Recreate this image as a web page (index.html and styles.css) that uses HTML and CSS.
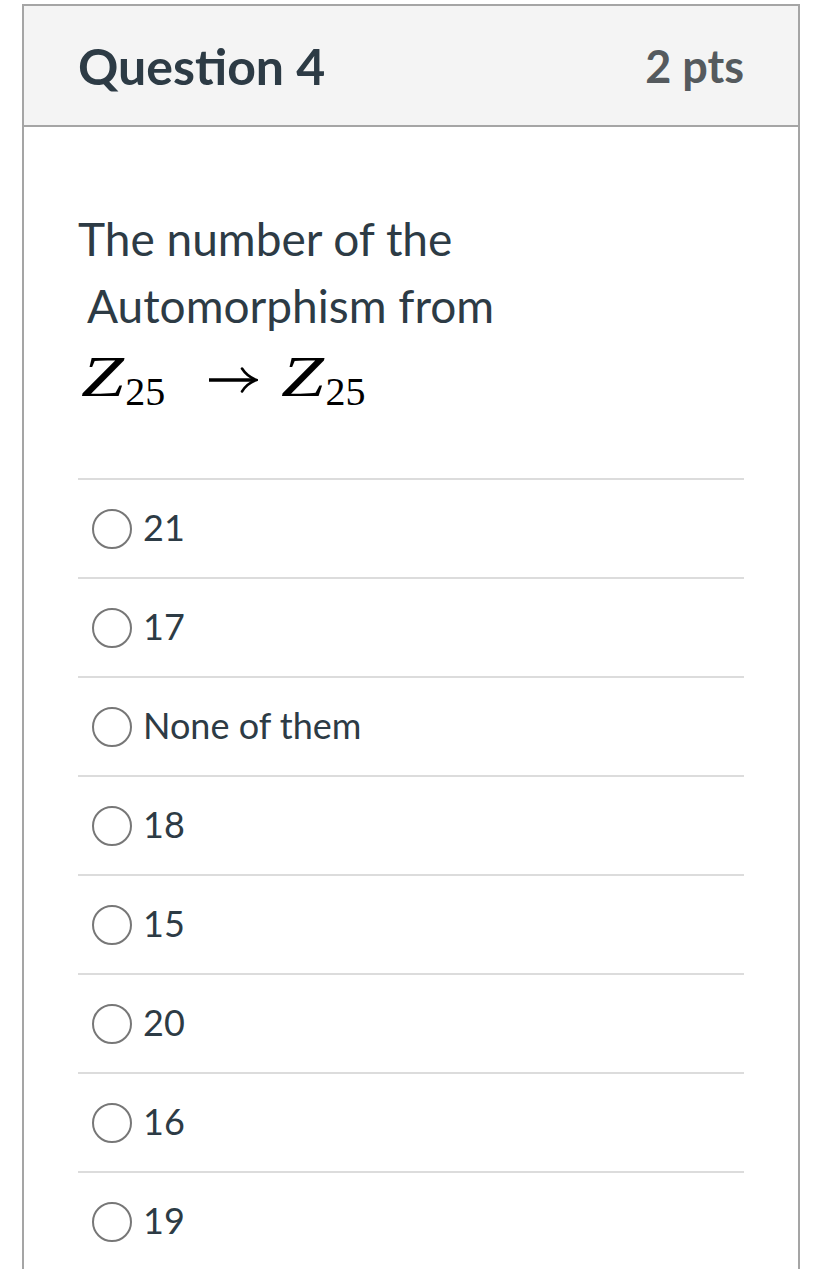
FILE: index.html
```html
<!DOCTYPE html>
<html>
<head>
<meta charset="utf-8">
<link rel="stylesheet" href="styles.css">
</head>
<body>
<div class="quiz">
  <div class="quiz-header">
    <h2 class="q-title">Question 4</h2>
    <span class="q-pts">2 pts</span>
  </div>
  <div class="quiz-body">
    <div class="q-text">
      <p class="line">The number of the</p>
      <p class="line indent">Automorphism from</p>
      <p class="math"><span class="mi">Z</span><span class="sub">25</span><svg class="arrow" width="50" height="26" viewBox="0 0 50 26" aria-label="→"><line x1="1" y1="13" x2="46" y2="13" stroke="#000" stroke-width="3.4"/><path d="M34 1.5 Q39 9.5 48.5 13 Q39 16.5 34 24.5" fill="none" stroke="#000" stroke-width="2.6" stroke-linecap="round"/></svg><span class="mi">Z</span><span class="sub">25</span></p>
    </div>
    <ul class="answers">
      <li class="answer"><span class="radio"></span><span class="label">21</span></li>
      <li class="answer"><span class="radio"></span><span class="label">17</span></li>
      <li class="answer"><span class="radio"></span><span class="label">None of them</span></li>
      <li class="answer"><span class="radio"></span><span class="label">18</span></li>
      <li class="answer"><span class="radio"></span><span class="label">15</span></li>
      <li class="answer"><span class="radio"></span><span class="label">20</span></li>
      <li class="answer"><span class="radio"></span><span class="label">16</span></li>
      <li class="answer"><span class="radio"></span><span class="label">19</span></li>
    </ul>
  </div>
</div>
</body>
</html>
```
FILE: styles.css
```css
html, body {
  margin: 0;
  padding: 0;
  background: #ffffff;
}
body {
  font-family: Lato, "Open Sans", sans-serif;
  color: #2d3b45;
  overflow: hidden;
}
.quiz {
  margin: 4px 0 0 22px;
  width: 774px;
  border: 2px solid #a5a5a5;
  min-height: 1400px;
}
.quiz-header {
  background: #f4f4f4;
  border-bottom: 2px solid #a5a5a5;
  height: 119px;
  padding: 0 54px;
  display: flex;
  align-items: center;
  justify-content: space-between;
}
.q-title {
  margin: 0;
  font-size: 50px;
  font-weight: 700;
  color: #2d3b45;
}
.q-pts {
  font-size: 45px;
  font-weight: 700;
  color: #555a5e;
}
.quiz-body {
  padding: 0 54px;
}
.q-text {
  padding-top: 78px;
  padding-bottom: 64px;
}
.line {
  margin: 0;
  font-size: 46px;
  line-height: 67px;
}
.indent {
  padding-left: 9px;
}
.math {
  margin: 0;
  padding-left: 3px;
  font-family: "Liberation Serif", "Times New Roman", serif;
  color: #000;
  line-height: 75px;
  font-size: 60px;
  white-space: nowrap;
}
.math span {
  line-height: 0;
}
.mi {
  display: inline-block;
  font-style: italic;
  font-size: 58px;
  transform: scaleX(1.33);
  transform-origin: left center;
}
.sub {
  font-size: 40px;
  position: relative;
  top: 9px;
  margin-left: 12px;
}
.arrow {
  vertical-align: 3px;
  margin: 0 23px 0 43px;
}
.answers {
  list-style: none;
  margin: 0;
  padding: 0;
}
.answer {
  border-top: 2px solid #dcdcdc;
  height: 97px;
  display: flex;
  align-items: center;
  padding-left: 14px;
}
.radio {
  width: 36px;
  height: 36px;
  border: 2px solid #777777;
  border-radius: 50%;
  flex: none;
}
.label {
  margin-left: 11px;
  padding-bottom: 4px;
  font-size: 36px;
  color: #2d3b45;
}
```
